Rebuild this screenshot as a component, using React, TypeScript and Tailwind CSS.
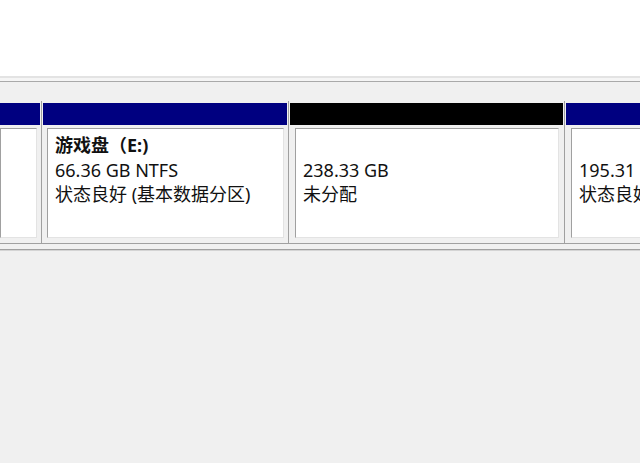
const font = { fontFamily: '"Noto Sans", "Noto Sans CJK SC", sans-serif' }

type Part = {
  width: string
  bar: string
  lines: (string | null)[]
  bold?: boolean
  boxClass: string
}

const parts: Part[] = [
  { width: 'w-[40px]', bar: 'bg-[#000080]', lines: [null, null, null], boxClass: 'ml-0 mr-[3px]' },
  {
    width: 'w-[244px]',
    bar: 'bg-[#000080]',
    lines: ['游戏盘（E:)', '66.36 GB NTFS', '状态良好 (基本数据分区)'],
    bold: true,
    boxClass: 'ml-[4px] mr-[3px]',
  },
  { width: 'w-[273px]', bar: 'bg-black', lines: [null, '238.33 GB', '未分配'], boxClass: 'ml-[5px] mr-[4px]' },
  {
    width: 'flex-1',
    bar: 'bg-[#000080]',
    lines: [null, '195.31 GB NTFS', '状态良好 (基本数据分区)'],
    boxClass: 'ml-[5px] -mr-[200px]',
  },
]

function Divider() {
  return (
    <div className="flex w-[3px] shrink-0 justify-center">
      <div className="w-px bg-[#a0a0a0]" />
    </div>
  )
}

function Column({ part }: { part: Part }) {
  return (
    <div className={`${part.width} shrink-0 flex flex-col pt-[2px] pb-[5px] min-w-0`}>
      <div className={`h-[22px] ${part.bar}`} />
      <div
        className={`mt-[3px] h-[110px] bg-white border-t border-l border-[#a0a0a0] border-r border-b border-r-[#e3e3e3] border-b-[#e3e3e3] pl-[7px] pt-[4px] whitespace-nowrap overflow-hidden ${part.boxClass}`}
      >
        {part.lines.map((line, i) => (
          <div
            key={i}
            className={`h-[24.5px] leading-[24.5px] text-[18px] text-[#111] ${i === 0 && part.bold ? 'font-bold' : ''}`}
          >
            {line ?? ''}
          </div>
        ))}
      </div>
    </div>
  )
}

export default function App() {
  return (
    <div className="w-[640px] h-[463px] overflow-hidden bg-[#f0f0f0]" style={font}>
      <div className="h-[76px] bg-white" />
      <div className="h-[2px] bg-[#e3e3e3]" />
      <div className="h-[3px] bg-[#f5f5f5]" />
      <div className="h-px bg-[#a9a9a9]" />
      <div className="h-[19px]" />
      <div className="flex overflow-hidden">
        <Column part={parts[0]} />
        <Divider />
        <Column part={parts[1]} />
        <Divider />
        <Column part={parts[2]} />
        <Divider />
        <Column part={parts[3]} />
      </div>
      <div className="h-px bg-[#a0a0a0]" />
      <div className="h-[5px]" />
      <div className="h-px bg-[#a0a0a0]" />
      <div className="h-px bg-[#d4d4d4]" />
    </div>
  )
}
